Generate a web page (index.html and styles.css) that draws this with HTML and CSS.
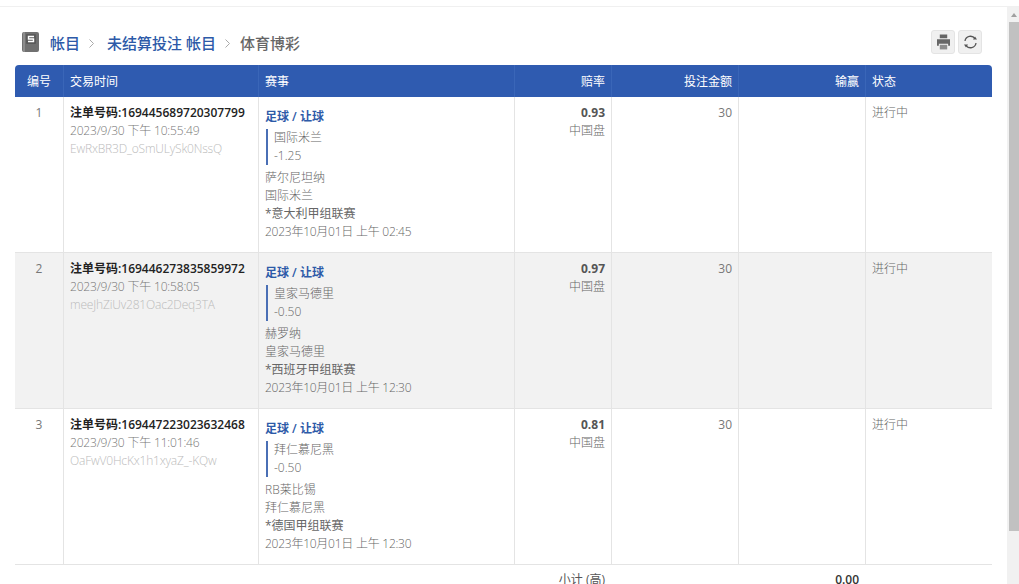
FILE: index.html
```html
<!DOCTYPE html>
<html lang="zh">
<head>
<meta charset="utf-8">
<title>体育博彩</title>
<link rel="stylesheet" href="styles.css">
</head>
<body>
<div class="topline"></div>
<div class="shell">
  <main class="content">
    <header class="head">
      <nav class="crumbs">
        <svg class="wallet" width="17" height="20" viewBox="0 0 17 20"><path d="M2 0h13a2 2 0 0 1 2 2v16a2 2 0 0 1-2 2H2a2 2 0 0 1-2-2V2a2 2 0 0 1 2-2z" fill="#707070"/><path d="M1 0h2v20H1z" fill="#8c8c8c"/><rect x="4" y="2" width="10" height="10" rx="1" fill="#5a5a5a"/><path d="M12 4.500H6.500v2.500h5v2.500H6" fill="none" stroke="#fff" stroke-width="1.400"/></svg>
        <a class="crumb-link">帐目</a>
        <svg class="sep" width="5" height="9" viewBox="0 0 5 9"><path d="M.5.5l4 4-4 4" fill="none" stroke="#aaa"/></svg>
        <a class="crumb-link">未结算投注 帐目</a>
        <svg class="sep sep-last" width="5" height="9" viewBox="0 0 5 9"><path d="M.5.5l4 4-4 4" fill="none" stroke="#aaa"/></svg>
        <span class="crumb-now">体育博彩</span>
      </nav>
      <div class="tools">
        <button class="tool"><svg width="13" height="16" viewBox="0 0 14 16"><path d="M3 0h8v4H3zM0 5h14v7h-2v-2H2v2H0z" fill="#666"/><path d="M3 11h8v5H3z" fill="#8c8c8c"/></svg></button>
        <button class="tool"><svg width="15" height="14" viewBox="0 0 15 14"><path d="M2 6a5.500 5.500 0 0 1 10-2.300M13 8a5.500 5.500 0 0 1-10 2.300" fill="none" stroke="#555" stroke-width="1.300"/><path d="M10 4.500h4l-2-3zM5 9.500H1l2 3z" fill="#555"/></svg></button>
      </div>
    </header>
    <table class="bets">
      <colgroup><col class="c1"><col class="c2"><col class="c3"><col class="c4"><col class="c5"><col class="c6"><col class="c7"></colgroup>
      <thead>
        <tr><th class="ctr">编号</th><th>交易时间</th><th>赛事</th><th class="rt">赔率</th><th class="rt">投注金额</th><th class="rt">输赢</th><th>状态</th></tr>
      </thead>
      <tbody>
        <tr>
          <td class="ctr num">1</td>
          <td><div class="ticket">注单号码:169445689720307799</div><div class="time">2023/9/30 下午 10:55:49</div><div class="ref">EwRxBR3D_oSmULySk0NssQ</div></td>
          <td><div class="sport">足球 / 让球</div><div class="pick"><div>国际米兰</div><div>-1.25</div></div><div class="line">萨尔尼坦纳</div><div class="line">国际米兰</div><div class="line league">*意大利甲组联赛</div><div class="line when">2023年10月01日 上午 02:45</div></td>
          <td class="rt"><div class="odds">0.93</div><div class="line">中国盘</div></td>
          <td class="rt num">30</td><td></td><td>进行中</td>
        </tr>
        <tr class="alt">
          <td class="ctr num">2</td>
          <td><div class="ticket">注单号码:169446273835859972</div><div class="time">2023/9/30 下午 10:58:05</div><div class="ref">meeJhZiUv281Oac2Deq3TA</div></td>
          <td><div class="sport">足球 / 让球</div><div class="pick"><div>皇家马德里</div><div>-0.50</div></div><div class="line">赫罗纳</div><div class="line">皇家马德里</div><div class="line league">*西班牙甲组联赛</div><div class="line when">2023年10月01日 上午 12:30</div></td>
          <td class="rt"><div class="odds">0.97</div><div class="line">中国盘</div></td>
          <td class="rt num">30</td><td></td><td>进行中</td>
        </tr>
        <tr>
          <td class="ctr num">3</td>
          <td><div class="ticket">注单号码:169447223023632468</div><div class="time">2023/9/30 下午 11:01:46</div><div class="ref">OaFwV0HcKx1h1xyaZ_-KQw</div></td>
          <td><div class="sport">足球 / 让球</div><div class="pick"><div>拜仁慕尼黑</div><div>-0.50</div></div><div class="line">RB莱比锡</div><div class="line">拜仁慕尼黑</div><div class="line league">*德国甲组联赛</div><div class="line when">2023年10月01日 上午 12:30</div></td>
          <td class="rt"><div class="odds">0.81</div><div class="line">中国盘</div></td>
          <td class="rt num">30</td><td></td><td>进行中</td>
        </tr>
      </tbody>
      <tfoot>
        <tr><td colspan="3"></td><td class="rt">小计 (高)</td><td></td><td class="rt total">0.00</td><td></td></tr>
      </tfoot>
    </table>
  </main>
  <div class="scrollbar"><span class="arrow"></span><span class="thumb"></span></div>
</div>
</body>
</html>
```
FILE: styles.css
```css
* { box-sizing: border-box; }
html, body { height: 100%; }
body {
  margin: 0;
  overflow: hidden;
  background: #fff;
  color: #666;
  font: 300 12px/18px "Open Sans", "Noto Sans CJK SC", sans-serif;
}
.topline { height: 7px; border-bottom: 1px solid #f0f0f0; }
.shell { display: flex; height: 577px; overflow: hidden; }
.content { width: 1007px; padding: 0 15px; flex: none; }
.scrollbar { width: 12px; flex: none; background: #f1f1f1; padding-left: 2px; display: flex; flex-direction: column; align-items: stretch; }
.arrow { height: 15px; position: relative; }
.arrow::after { content: ""; position: absolute; left: 2px; top: 6px; border: 3px solid transparent; border-top: 0; border-bottom: 4px solid #a0a0a0; }
.thumb { height: 509px; background: #c1c1c1; }
.head { height: 58px; display: flex; align-items: center; justify-content: space-between; padding: 12px 10px 0 7px; }
.crumbs { display: flex; align-items: center; font-size: 15px; font-weight: 400; padding-top: 2px; }
.wallet { margin: -2px 11px 0 0; }
.crumb-link { color: #2d5aa8; font-weight: 500; }
.sep { margin: 0 13px 0 9px; }
.sep-last { margin: 0 10px 0 9px; }
.crumb-now { color: #666; font-weight: 500; }
.tools { display: flex; gap: 3px; }
.tool { width: 24px; height: 24px; padding: 0; display: flex; align-items: center; justify-content: center; background: #f0f0f0; border: 1px solid #e4e4e4; border-radius: 3px; }
.bets { width: 977px; border-collapse: separate; border-spacing: 0; table-layout: fixed; }
.c1 { width: 48px; } .c2 { width: 195px; } .c3 { width: 256px; } .c4 { width: 97px; } .c5 { width: 127px; } .c6 { width: 127px; } .c7 { width: 127px; }
.bets th { height: 32px; padding: 2px 6px 0; background: #2f5bb0; color: #fff; font-weight: 400; text-align: left; border-left: 1px solid #3a66b8; }
.bets th:first-child { border-left: 0; border-top-left-radius: 4px; }
.bets th:last-child { border-top-right-radius: 4px; }
.bets td { padding: 7px 6px 0; vertical-align: top; border-left: 1px solid #e4e4e4; }
.bets tbody td { height: 156px; border-bottom: 1px solid #e4e4e4; }
.bets td:first-child { border-left: 0; }
.bets .ctr { text-align: center; }
.bets .rt { text-align: right; }
.bets .num { font-weight: 400; color: #777; }
.bets tfoot td { border-left: 0; padding-top: 6px; color: #555; font-weight: 400; }
.alt td { background: #f2f2f2; }
.ticket { color: #222; font-weight: 600; }
.time { color: #777; letter-spacing: -0.18px; }
.ref { color: #bbb; letter-spacing: -0.18px; }
.when { letter-spacing: -0.25px; }
.sport { color: #2d5aa8; font-weight: 600; margin-top: 3px; line-height: 19px; }
.pick { border-left: 2px solid #4a6fb5; margin: 3px 0 4px 1px; padding-left: 6px; }
.league { color: #666; font-weight: 400; }
.odds { color: #555; font-weight: 700; }
.bets tfoot .total { color: #333; font-weight: 600; }
```
